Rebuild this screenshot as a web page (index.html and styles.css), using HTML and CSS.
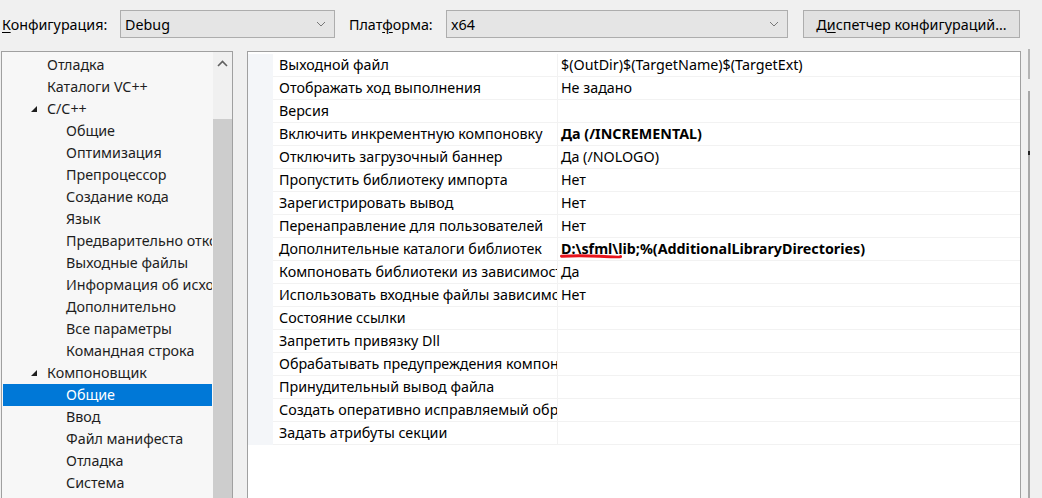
FILE: index.html
```html
<!DOCTYPE html>
<html>
<head>
<meta charset="utf-8">
<link rel="stylesheet" href="styles.css">
</head>
<body>
<div class="toolbar">
  <span class="label label-config"><u>К</u>онфигурация:</span>
  <div class="select select-config"><span>Debug</span><svg class="chev" width="10" height="6" viewBox="0 0 10 6"><path d="M1 1 L5 5 L9 1" fill="none" stroke="#777" stroke-width="1"/></svg></div>
  <span class="label label-platform">Плат<u>ф</u>орма:</span>
  <div class="select select-platform"><span>x64</span><svg class="chev" width="10" height="6" viewBox="0 0 10 6"><path d="M1 1 L5 5 L9 1" fill="none" stroke="#777" stroke-width="1"/></svg></div>
  <div class="button">Д<u>и</u>спетчер конфигураций...</div>
</div>
<div class="main">
  <div class="tree">
    <div class="tree-list">
      <div class="node l1">Отладка</div>
      <div class="node l1">Каталоги VC++</div>
      <div class="node l1"><span class="tri"></span>C/C++</div>
      <div class="node l2">Общие</div>
      <div class="node l2">Оптимизация</div>
      <div class="node l2">Препроцессор</div>
      <div class="node l2">Создание кода</div>
      <div class="node l2">Язык</div>
      <div class="node l2">Предварительно откомпилированные заголовки</div>
      <div class="node l2">Выходные файлы</div>
      <div class="node l2">Информация об исходных файлах</div>
      <div class="node l2">Дополнительно</div>
      <div class="node l2">Все параметры</div>
      <div class="node l2">Командная строка</div>
      <div class="node l1"><span class="tri"></span>Компоновщик</div>
      <div class="node l2 selected">Общие</div>
      <div class="node l2">Ввод</div>
      <div class="node l2">Файл манифеста</div>
      <div class="node l2">Отладка</div>
      <div class="node l2">Система</div>
    </div>
    <div class="scrollbar">
      <div class="arrow"><svg width="11" height="7" viewBox="0 0 11 7"><path d="M1 6 L5.5 1.5 L10 6" fill="none" stroke="#606060" stroke-width="1.6"/></svg></div>
      <div class="thumb"></div>
    </div>
  </div>
  <div class="grid">
    <div class="rows">
      <div class="row"><div class="gut"></div><div class="name">Выходной файл</div><div class="val">$(OutDir)$(TargetName)$(TargetExt)</div></div>
      <div class="row"><div class="gut"></div><div class="name">Отображать ход выполнения</div><div class="val">Не задано</div></div>
      <div class="row"><div class="gut"></div><div class="name">Версия</div><div class="val"></div></div>
      <div class="row"><div class="gut"></div><div class="name">Включить инкрементную компоновку</div><div class="val bold">Да (/INCREMENTAL)</div></div>
      <div class="row"><div class="gut"></div><div class="name">Отключить загрузочный баннер</div><div class="val">Да (/NOLOGO)</div></div>
      <div class="row"><div class="gut"></div><div class="name">Пропустить библиотеку импорта</div><div class="val">Нет</div></div>
      <div class="row"><div class="gut"></div><div class="name">Зарегистрировать вывод</div><div class="val">Нет</div></div>
      <div class="row"><div class="gut"></div><div class="name">Перенаправление для пользователей</div><div class="val">Нет</div></div>
      <div class="row"><div class="gut"></div><div class="name">Дополнительные каталоги библиотек</div><div class="val bold marked">D:\sfml\lib;%(AdditionalLibraryDirectories)<svg class="underline" width="62" height="6" viewBox="0 0 62 6"><path d="M1.5 3.2 Q 20 2.2 40 3.3 T 60.5 3.6" fill="none" stroke="#e8141c" stroke-width="3" stroke-linecap="round"/></svg></div></div>
      <div class="row"><div class="gut"></div><div class="name">Компоновать библиотеки из зависимостей</div><div class="val">Да</div></div>
      <div class="row"><div class="gut"></div><div class="name">Использовать входные файлы зависимостей библиотек</div><div class="val">Нет</div></div>
      <div class="row"><div class="gut"></div><div class="name">Состояние ссылки</div><div class="val"></div></div>
      <div class="row"><div class="gut"></div><div class="name">Запретить привязку Dll</div><div class="val"></div></div>
      <div class="row"><div class="gut"></div><div class="name">Обрабатывать предупреждения компоновщика как ошибки</div><div class="val"></div></div>
      <div class="row"><div class="gut"></div><div class="name">Принудительный вывод файла</div><div class="val"></div></div>
      <div class="row"><div class="gut"></div><div class="name">Создать оперативно исправляемый образ</div><div class="val"></div></div>
      <div class="row"><div class="gut"></div><div class="name">Задать атрибуты секции</div><div class="val"></div></div>
    </div>
  </div>
  <div class="side">
    <div class="side-top"></div>
    <div class="side-bottom"><span class="mark"></span></div>
  </div>
</div>
</body>
</html>
```

FILE: styles.css
```css
html, body {
  margin: 0;
  padding: 0;
  height: 100%;
  overflow: hidden;
}
body {
  background: #f0f0f0;
  font-family: "Noto Sans", "Open Sans", sans-serif;
  font-size: 14.3px;
  color: #000;
}
u {
  text-decoration: underline;
  text-underline-offset: 2px;
}
.toolbar {
  display: flex;
  align-items: center;
  height: 48px;
  box-sizing: border-box;
}
.label {
  white-space: nowrap;
  color: #000;
}
.label-config {
  margin-left: 2px;
  width: 118px;
}
.label-platform {
  margin-left: 14px;
  width: 97px;
}
.select {
  height: 28px;
  box-sizing: border-box;
  border: 1px solid #adadad;
  background: #e5e5e5;
  display: flex;
  align-items: center;
  justify-content: space-between;
  padding: 0 8px 0 4px;
}
.select-config {
  width: 215px;
}
.select-platform {
  width: 342px;
}
.chev {
  display: block;
}
.button {
  margin-left: 15px;
  width: 217px;
  height: 28px;
  box-sizing: border-box;
  border: 1px solid #adadad;
  background: #e1e1e1;
  display: flex;
  align-items: center;
  justify-content: center;
  white-space: nowrap;
}
.main {
  display: flex;
  align-items: flex-start;
  margin-top: 3px;
  height: 460px;
}
.tree {
  margin-left: 1px;
  width: 232px;
  height: 460px;
  box-sizing: border-box;
  border: 1px solid #a0a0a0;
  border-bottom: none;
  background: #f7f7f7;
  display: flex;
}
.tree-list {
  width: 210px;
  padding-top: 2px;
  overflow: hidden;
}
.node {
  height: 22px;
  line-height: 22px;
  white-space: nowrap;
  overflow: hidden;
  color: #1e1e1e;
  position: relative;
  margin-left: 1px;
}
.node.l1 {
  padding-left: 44px;
}
.node.l2 {
  padding-left: 63px;
}
.node.selected {
  background: #0078d7;
  color: #fff;
}
.tri {
  position: absolute;
  left: 28px;
  top: 8px;
  width: 0;
  height: 0;
  border-style: solid;
  border-width: 0 0 6px 6px;
  border-color: transparent transparent #1e1e1e transparent;
}
.scrollbar {
  width: 19px;
  margin-left: 1px;
  background: #f0f0f0;
  display: flex;
  flex-direction: column;
}
.arrow {
  height: 67px;
  display: flex;
  justify-content: center;
  padding-top: 8px;
  box-sizing: border-box;
}
.arrow svg {
  display: block;
}
.thumb {
  flex: 1;
  background: #cdcdcd;
}
.grid {
  margin-left: 14px;
  width: 774px;
  height: 460px;
  box-sizing: border-box;
  border: 1px solid #a0a0a0;
  border-bottom: none;
  background: #fff;
  padding-top: 2px;
}
.row {
  display: flex;
  height: 23px;
  line-height: 22px;
}
.gut {
  width: 25px;
  background: #f4f6f9;
  flex: none;
}
.name {
  width: 285px;
  flex: none;
  box-sizing: border-box;
  padding-left: 6px;
  border-bottom: 1px solid #f2f2f2;
  border-right: 1px solid #f2f2f2;
  white-space: nowrap;
  overflow: hidden;
}
.val {
  flex: 1;
  padding-left: 3px;
  border-bottom: 1px solid #f2f2f2;
  white-space: nowrap;
  overflow: hidden;
  position: relative;
}
.val.bold {
  font-weight: bold;
}
.underline {
  position: absolute;
  left: 2px;
  top: 15px;
}
.side {
  margin-left: 7px;
  display: flex;
  flex-direction: column;
}
.side-top {
  margin-top: -2px;
  height: 30px;
  border-left: 2px solid #b4b4b4;
}
.side-bottom {
  margin-top: 12px;
  height: 420px;
  border-left: 2px solid #a8a8a8;
  position: relative;
}
.mark {
  position: absolute;
  left: -2px;
  top: 60px;
  width: 2px;
  height: 4px;
  background: #222;
}
```
